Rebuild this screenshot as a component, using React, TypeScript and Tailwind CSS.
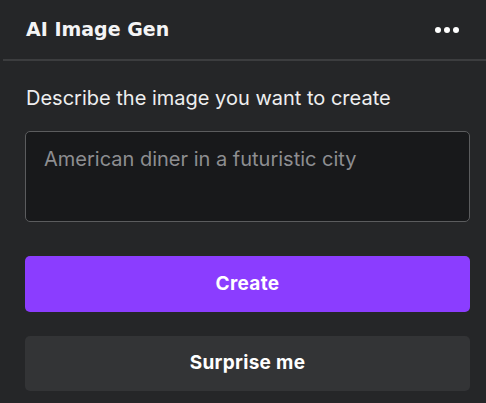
import React from "react";

export default function App() {
  return (
    <div className="h-[403px] w-[486px] overflow-hidden bg-[#252628] font-['Inter',sans-serif] text-white">
      <div className="flex h-[59px] items-center justify-between pl-[26px] pr-[27px]">
        <h1 className="font-['DejaVu_Sans',sans-serif] text-[19px] font-bold text-[#f4f4f5]">AI Image Gen</h1>
        <div className="flex gap-[3px]">
          <span className="h-[6px] w-[6px] rounded-full bg-white" />
          <span className="h-[6px] w-[6px] rounded-full bg-white" />
          <span className="h-[6px] w-[6px] rounded-full bg-white" />
        </div>
      </div>
      <div className="ml-[3px] h-[2px] bg-[#3c3d3f]" />
      <div className="pl-[25px] pr-[16px] pt-[24px]">
        <p className="pl-[1px] text-[20px] leading-[26px] text-[#eeeeef]">Describe the image you want to create</p>
        <div className="mt-[20px] h-[91px] rounded-[5px] border border-[#5b5c5e] bg-[#18191b] px-[18px] pt-[14px] text-[20px] leading-[26px] text-[#8d8e91]">
          American diner in a futuristic city
        </div>
        <button className="mt-[34px] flex h-[56px] w-full items-center justify-center rounded-[5px] bg-[#8b3dff] text-[19px] font-bold tracking-[0.3px] text-white">
          Create
        </button>
        <button className="mt-[24px] flex h-[55px] w-full items-center justify-center rounded-[5px] bg-[#333436] text-[19px] font-bold tracking-[0.3px] text-white">
          Surprise me
        </button>
      </div>
    </div>
  );
}
